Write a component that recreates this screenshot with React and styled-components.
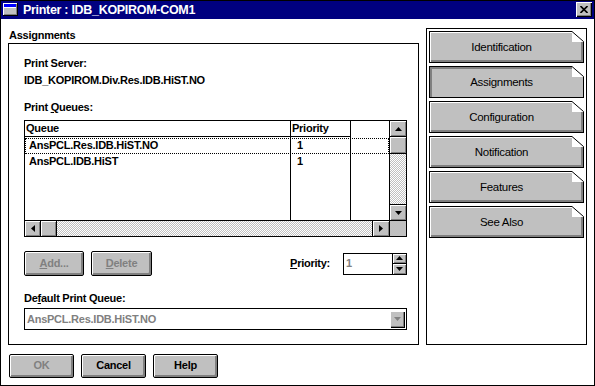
import React from 'react';
import styled, { createGlobalStyle } from 'styled-components';

const FONT = `"Liberation Sans", Arial, sans-serif`;
const FACE = '#c0c0c0';
const SHADE = '#808080';

const GlobalStyle = createGlobalStyle`
  html, body {
    margin: 0;
    padding: 0;
    background: #fff;
  }
  * {
    box-sizing: border-box;
  }
`;

const Window = styled.div`
  width: 595px;
  height: 386px;
  border: 1px solid #000;
  background: #fff;
  display: flex;
  flex-direction: column;
  font: bold 11px/13px ${FONT};
  letter-spacing: -0.25px;
  color: #000;
  overflow: hidden;
`;

const TitleBar = styled.div`
  flex: none;
  height: 18px;
  background: #000080;
  display: flex;
  align-items: flex-start;
  padding: 1px 2px 0 1px;
`;

const SysIcon = styled.svg`
  flex: none;
`;

const Title = styled.div`
  margin-left: 5px;
  color: #fff;
  font: bold 12.5px/17px ${FONT};
  letter-spacing: -0.3px;
`;

const CloseBox = styled.div`
  margin-left: auto;
  width: 16px;
  height: 15px;
  background: ${FACE};
  box-shadow: inset 1px 1px #fff, inset -1px -1px #000, inset -2px -2px ${SHADE};
  display: flex;
  align-items: center;
  justify-content: center;
`;

const Body = styled.div`
  flex: 1;
  display: flex;
  align-items: flex-start;
  gap: 7px;
  padding: 9px 7px 0;
`;

const MainColumn = styled.div`
  width: 411px;
  display: flex;
  flex-direction: column;
`;

const Heading = styled.div`
  margin: 1px 0 1px 1px;
`;

const GroupBox = styled.div`
  border: 1px solid #000;
  padding: 13px 11px 14px 15px;
  display: flex;
  flex-direction: column;
`;

const Label = styled.div`
  margin-top: ${(p) => p.$mt || 0}px;
  white-space: nowrap;
`;

const ListBox = styled.div`
  margin-top: 6px;
  height: 117px;
  border: 1px solid #000;
  display: grid;
  grid-template-columns: 1fr 17px;
  grid-template-rows: 1fr 16px;
`;

/* column rules of the list run the full height, like the table grid */
const ListView = styled.div`
  background:
    linear-gradient(#000, #000) 265px 0 / 1px 100% no-repeat,
    linear-gradient(#000, #000) 325px 0 / 1px 100% no-repeat,
    #fff;
  display: flex;
  flex-direction: column;
  overflow: hidden;
`;

const HeaderRow = styled.div`
  width: 326px;
  height: 16px;
  border-bottom: 1px solid #000;
  display: grid;
  grid-template-columns: 266px 60px;
  line-height: 15px;
`;

const HeaderCell = styled.div`
  padding-left: 1px;
`;

const Row = styled.div`
  height: 16px;
  margin-top: ${(p) => (p.$first ? 1 : 0)}px;
  display: grid;
  grid-template-columns: 266px 60px 1fr;
  line-height: 15px;
  outline: ${(p) => (p.$focused ? '1px dotted #000' : 'none')};
  outline-offset: -1px;
`;

const Cell = styled.div`
  padding-left: ${(p) => p.$pad}px;
  white-space: nowrap;
`;

const VScroll = styled.div`
  border-left: 1px solid #000;
  display: flex;
  flex-direction: column;
`;

const HScroll = styled.div`
  border-top: 1px solid #000;
  display: flex;
`;

const Corner = styled.div`
  border-top: 1px solid #000;
  border-left: 1px solid #000;
  background: ${FACE};
`;

const Track = styled.div`
  flex: 1;
  background: repeating-conic-gradient(${FACE} 0% 25%, #fff 0% 50%) 0 0 / 2px 2px;
`;

const ScrollPart = styled.div`
  flex: none;
  width: ${(p) => p.$w || 'auto'};
  height: ${(p) => p.$h || 'auto'};
  background: ${FACE};
  box-shadow: inset 1px 1px #fff, inset -1px -1px ${SHADE};
  border-style: solid;
  border-color: #000;
  border-width: ${(p) => p.$edges};
  display: flex;
  align-items: center;
  justify-content: center;
`;

const ActionsRow = styled.div`
  margin-top: 14px;
  display: flex;
  align-items: center;
`;

const Button = styled.div`
  flex: none;
  width: ${(p) => p.$w}px;
  height: ${(p) => p.$h}px;
  margin-right: ${(p) => p.$mr || 0}px;
  border: 1px solid #000;
  border-radius: 2px;
  background: ${FACE};
  box-shadow: inset 1px 1px #fff, inset -2px -2px ${SHADE};
  color: ${(p) => (p.$disabled ? SHADE : '#000')};
  display: flex;
  align-items: center;
  justify-content: center;
  padding-bottom: 1px;
`;

const PriorityLabel = styled.div`
  margin-left: auto;
  margin-right: 13px;
`;

const Spinner = styled.div`
  display: flex;
  height: 22px;
`;

const SpinField = styled.div`
  width: 50px;
  border: 1px solid #000;
  padding-left: 2px;
  line-height: 19px;
  color: ${SHADE};
`;

const SpinButtons = styled.div`
  width: 14px;
  border: 1px solid #000;
  border-left: none;
  display: flex;
  flex-direction: column;
`;

const SpinButton = styled.div`
  flex: 1;
  background: ${FACE};
  box-shadow: inset 1px 1px #fff, inset -1px -1px ${SHADE};
  border-top: ${(p) => (p.$lower ? '1px solid #000' : 'none')};
  display: flex;
  align-items: center;
  justify-content: center;
`;

const Combo = styled.div`
  margin-top: 3px;
  height: 22px;
  border: 1px solid #000;
  display: flex;
  align-items: center;
  padding: 0 1px 0 2px;
  color: ${SHADE};
`;

const ComboButton = styled.div`
  margin-left: auto;
  width: 15px;
  height: 17px;
  background: ${FACE};
  box-shadow: inset 1px 1px #fff, inset -1px -1px #000, inset -2px -2px ${SHADE};
  display: flex;
  align-items: center;
  justify-content: center;
`;

const DialogButtons = styled.div`
  margin: 9px 0 0 1px;
  display: flex;
  gap: 7px;
`;

const SidePanel = styled.div`
  width: 161px;
  height: 317px;
  border: 1px solid #000;
  padding: 2px;
  display: flex;
  flex-direction: column;
  gap: 3px;
`;

const PageTab = styled.div`
  position: relative;
  flex: none;
  height: 32px;
  border: 1px solid #000;
  background: ${FACE};
  box-shadow: ${(p) =>
    p.$active
      ? `inset 2px 2px ${SHADE}`
      : `inset 1px 1px #fff, inset -2px -2px ${SHADE}`};
  font: 11.5px/1 ${FONT};
  letter-spacing: -0.3px;
  display: flex;
  align-items: center;
  justify-content: center;
  padding: 2px 10px 0 0;
`;

const DogEar = styled.svg`
  position: absolute;
  top: -1px;
  right: -1px;
`;

const Arrow = ({ dir, color = '#000' }) => {
  const vertical = dir === 'up' || dir === 'down';
  const w = vertical ? 7 : 4;
  const h = vertical ? 4 : 7;
  const points = {
    up: '3.5,0 7,4 0,4',
    down: '0,0 7,0 3.5,4',
    left: '4,0 4,7 0,3.5',
    right: '0,0 4,3.5 0,7',
  }[dir];
  return (
    <svg width={w} height={h} viewBox={`0 0 ${w} ${h}`}>
      <polygon points={points} fill={color} />
    </svg>
  );
};

const tabs = ['Identification', 'Assignments', 'Configuration', 'Notification', 'Features', 'See Also'];

const queues = [
  { name: 'AnsPCL.Res.IDB.HiST.NO', priority: '1' },
  { name: 'AnsPCL.IDB.HiST', priority: '1' },
];

const App = () => (
  <>
    <GlobalStyle />
    <Window>
      <TitleBar>
        <SysIcon width="16" height="14" viewBox="0 0 16 14">
          <rect x="1" y="1" width="15" height="13" fill="#000" />
          <rect x="1" y="1" width="14" height="12" fill="#fff" />
          <rect x="2" y="2" width="13" height="11" fill={SHADE} />
          <rect x="2" y="2" width="12" height="10" fill={FACE} />
          <rect x="2" y="2" width="12" height="3" fill="#0000ff" />
          <rect x="2" y="5" width="12" height="1" fill="#fff" />
        </SysIcon>
        <Title>Printer : IDB_KOPIROM-COM1</Title>
        <CloseBox>
          <svg width="8" height="7" viewBox="0 0 8 7">
            <path d="M0.5 0 L7.5 7 M7.5 0 L0.5 7" stroke="#000" strokeWidth="1.6" />
          </svg>
        </CloseBox>
      </TitleBar>

      <Body>
        <MainColumn>
          <Heading>Assignments</Heading>
          <GroupBox>
            <Label>Print Server:</Label>
            <Label $mt={4}>IDB_KOPIROM.Div.Res.IDB.HiST.NO</Label>
            <Label $mt={14}>
              Print <u>Q</u>ueues:
            </Label>
            <ListBox>
              <ListView>
                <HeaderRow>
                  <HeaderCell>Queue</HeaderCell>
                  <HeaderCell>Priority</HeaderCell>
                </HeaderRow>
                {queues.map((q, i) => (
                  <Row key={q.name} $first={i === 0} $focused={i === 0}>
                    <Cell $pad={4}>{q.name}</Cell>
                    <Cell $pad={6}>{q.priority}</Cell>
                    <Cell />
                  </Row>
                ))}
              </ListView>
              <VScroll>
                <ScrollPart $h="16px" $edges="0 0 1px 0">
                  <Arrow dir="up" />
                </ScrollPart>
                <ScrollPart $h="17px" $edges="0 0 1px 0" />
                <Track />
                <ScrollPart $h="16px" $edges="1px 0 0 0">
                  <Arrow dir="down" />
                </ScrollPart>
              </VScroll>
              <HScroll>
                <ScrollPart $w="16px" $edges="0 1px 0 0">
                  <Arrow dir="left" />
                </ScrollPart>
                <ScrollPart $w="16px" $edges="0 1px 0 0" />
                <Track />
                <ScrollPart $w="17px" $edges="0 0 0 1px">
                  <Arrow dir="right" />
                </ScrollPart>
              </HScroll>
              <Corner />
            </ListBox>

            <ActionsRow>
              <Button $w={60} $h={25} $mr={7} $disabled>
                <span>
                  <u>A</u>dd...
                </span>
              </Button>
              <Button $w={61} $h={25} $disabled>
                <span>
                  <u>D</u>elete
                </span>
              </Button>
              <PriorityLabel>
                <u>P</u>riority:
              </PriorityLabel>
              <Spinner>
                <SpinField>1</SpinField>
                <SpinButtons>
                  <SpinButton>
                    <Arrow dir="up" />
                  </SpinButton>
                  <SpinButton $lower>
                    <Arrow dir="down" />
                  </SpinButton>
                </SpinButtons>
              </Spinner>
            </ActionsRow>

            <Label $mt={16}>
              De<u>f</u>ault Print Queue:
            </Label>
            <Combo>
              AnsPCL.Res.IDB.HiST.NO
              <ComboButton>
                <Arrow dir="down" color={SHADE} />
              </ComboButton>
            </Combo>
          </GroupBox>

          <DialogButtons>
            <Button $w={65} $h={24} $disabled>
              OK
            </Button>
            <Button $w={65} $h={24}>
              Cancel
            </Button>
            <Button $w={65} $h={24}>
              Help
            </Button>
          </DialogButtons>
        </MainColumn>

        <SidePanel>
          {tabs.map((t) => (
            <PageTab key={t} $active={t === 'Assignments'}>
              {t}
              <DogEar width="12" height="11" viewBox="0 0 12 11">
                <rect width="12" height="11" fill="#fff" />
                <path d="M0 0.5 L11.5 10.5 L11.5 11" stroke="#000" strokeWidth="1" fill="none" />
              </DogEar>
            </PageTab>
          ))}
        </SidePanel>
      </Body>
    </Window>
  </>
);

export default App;
